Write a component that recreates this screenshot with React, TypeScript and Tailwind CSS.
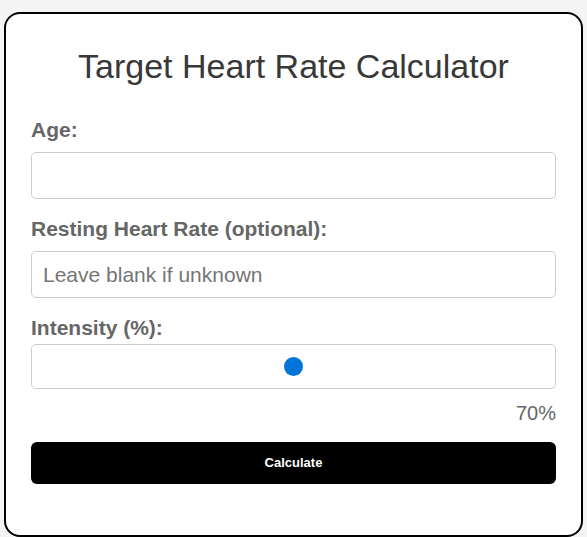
import React, { useState } from 'react';

const font = { fontFamily: '"Liberation Sans", Arial, sans-serif' };

export default function App() {
  const [age, setAge] = useState('');
  const [resting, setResting] = useState('');
  const [intensity, setIntensity] = useState(70);

  return (
    <div className="min-h-screen bg-[#f4f4f4] pt-3 px-1" style={font}>
      <div className="bg-white border-2 border-black rounded-[16px] px-[25px] pt-[33px] pb-[51px]">
        <h1 className="text-center text-[34px] leading-[39px] text-[#383838]">Target Heart Rate Calculator</h1>

        <label className="block mt-[32px] text-[21px] leading-[24px] font-bold text-[#666]">Age:</label>
        <input
          type="number"
          value={age}
          onChange={e => setAge(e.target.value)}
          className="block w-full mt-[10px] h-[47px] border border-[#ccc] rounded-[5px] px-[11px] text-[21px] outline-none"
        />

        <label className="block mt-[18px] text-[21px] leading-[24px] font-bold text-[#666]">Resting Heart Rate (optional):</label>
        <input
          type="number"
          value={resting}
          onChange={e => setResting(e.target.value)}
          placeholder="Leave blank if unknown"
          className="block w-full mt-[10px] h-[47px] border border-[#ccc] rounded-[5px] px-[11px] text-[21px] text-[#333] placeholder:text-[#757575] outline-none"
        />

        <label className="block mt-[18px] text-[21px] leading-[24px] font-bold text-[#666]">Intensity (%):</label>
        <div className="mt-[4px] h-[45px] border border-[#ccc] rounded-[5px] flex items-center px-[10px]">
          <input
            type="range"
            min={40}
            max={100}
            value={intensity}
            onChange={e => setIntensity(Number(e.target.value))}
            className="w-full appearance-none bg-transparent outline-none [&::-webkit-slider-thumb]:appearance-none [&::-webkit-slider-thumb]:w-[19px] [&::-webkit-slider-thumb]:h-[19px] [&::-webkit-slider-thumb]:rounded-full [&::-webkit-slider-thumb]:bg-[#0075d9]"
          />
        </div>
        <div className="mt-[13px] text-right text-[20px] leading-[23px] text-[#666]">{intensity}%</div>

        <button className="block w-full mt-[17px] h-[42px] bg-black rounded-[6px] text-white text-[13px] font-bold">
          Calculate
        </button>
      </div>
    </div>
  );
}
